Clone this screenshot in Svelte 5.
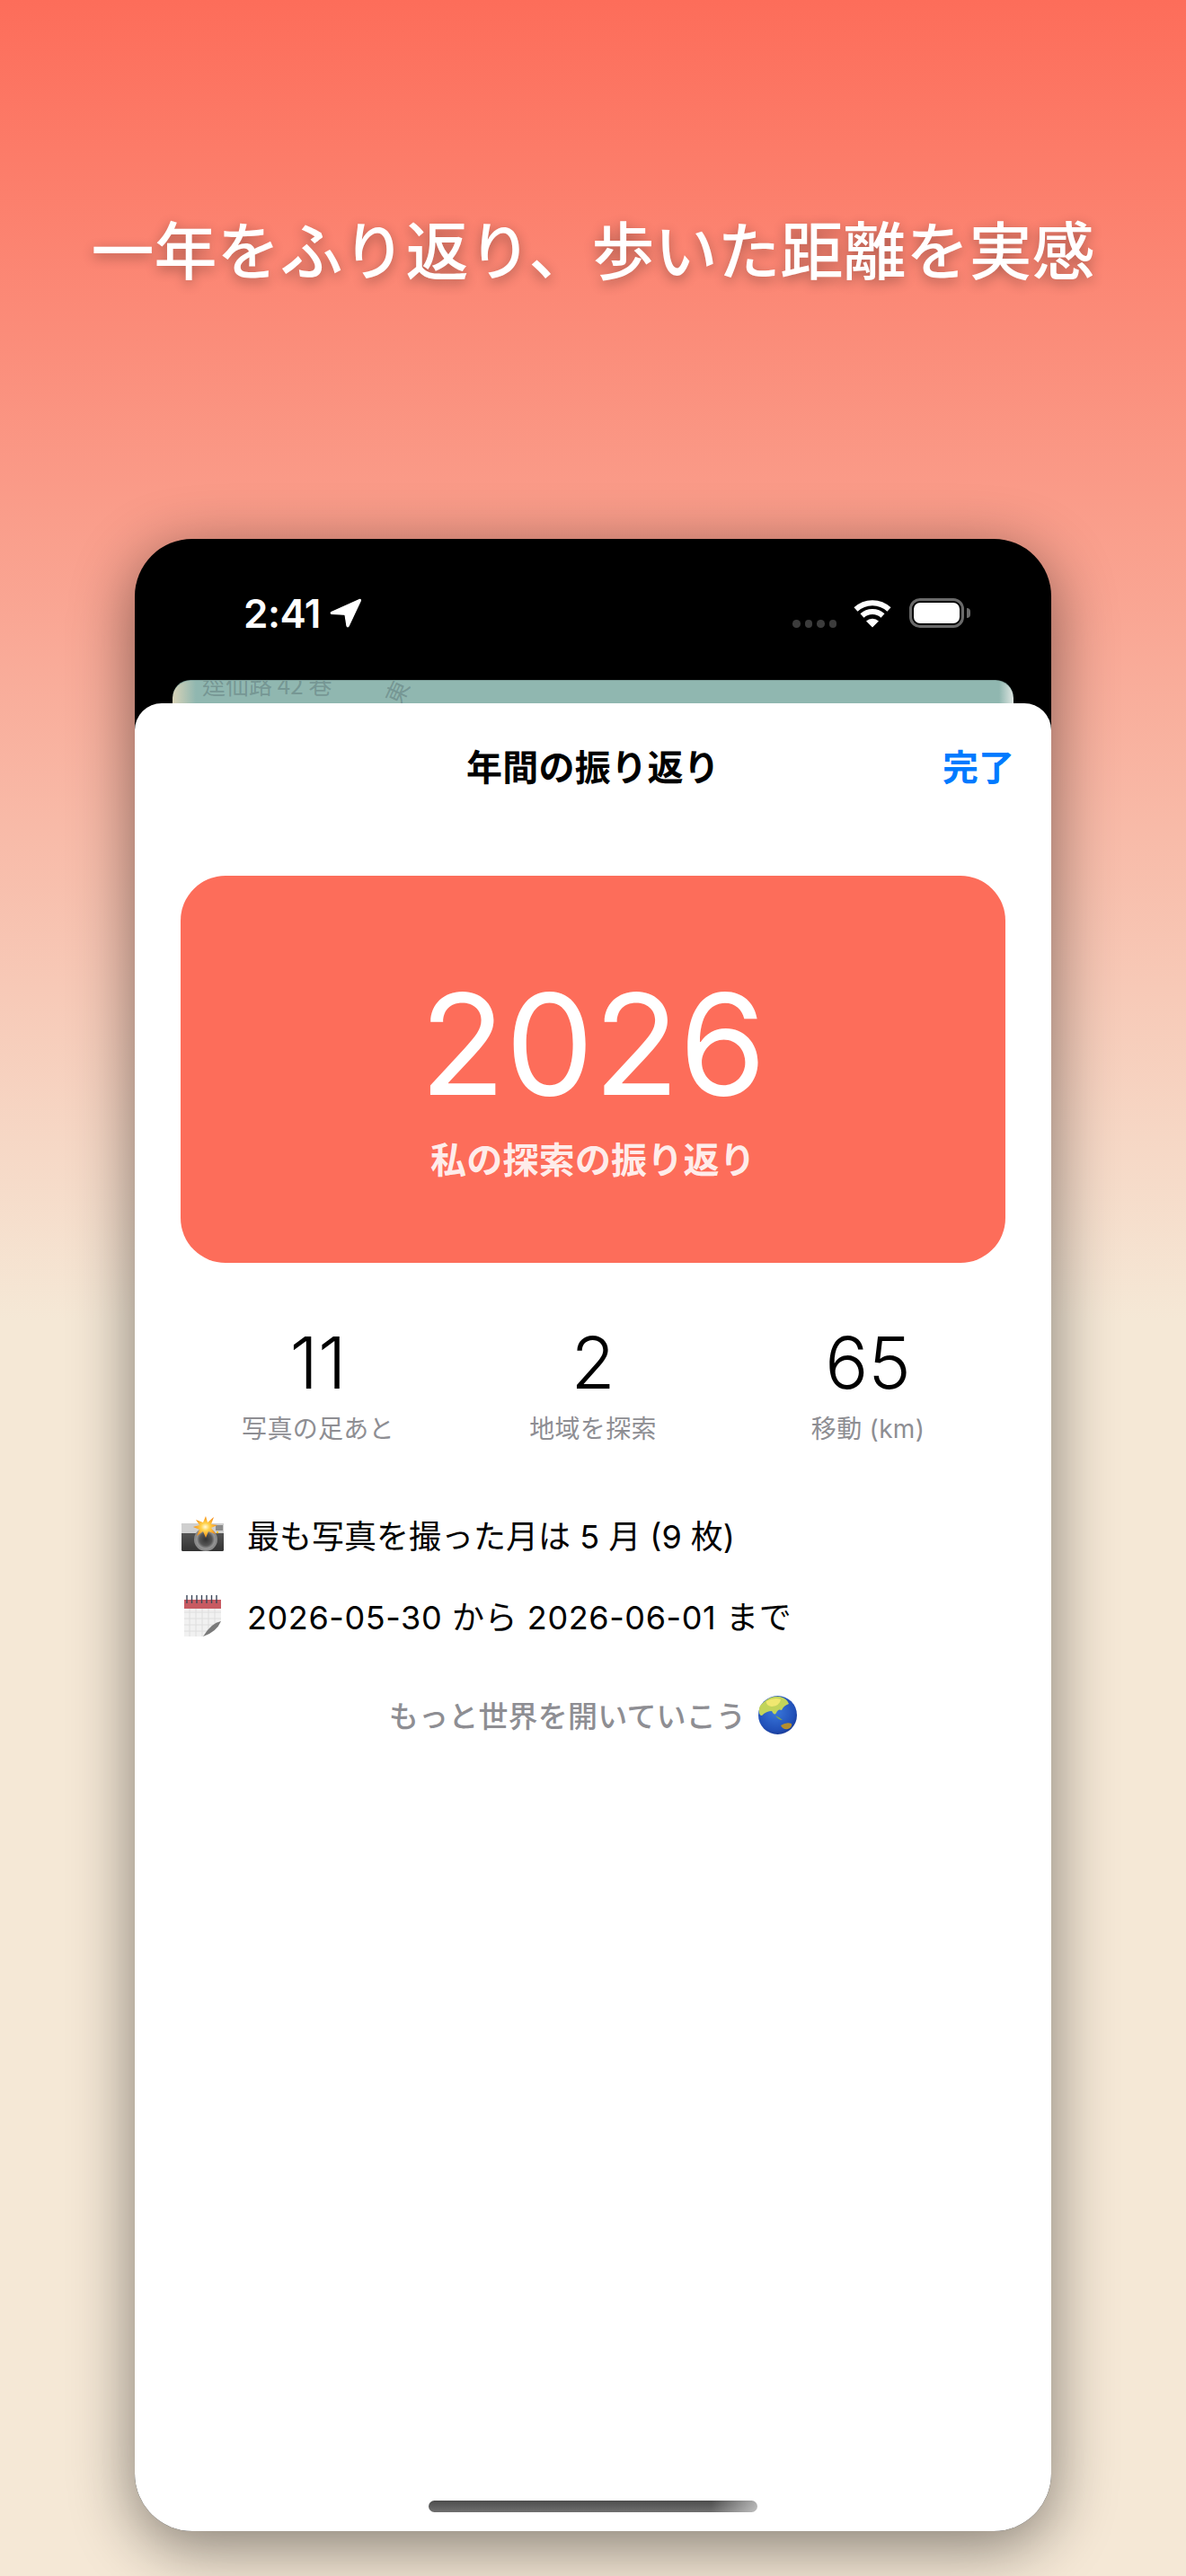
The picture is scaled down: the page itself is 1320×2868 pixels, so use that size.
<script>
	const stats = [
		{ value: '11', label: '写真の足あと' },
		{ value: '2', label: '地域を探索' },
		{ value: '65', label: '移動 (km)' }
	];
	const gridLines = [6, 13, 20, 27, 34];
</script>

<div class="page">
	<h1 class="hero">一年をふり返り、歩いた距離を実感</h1>

	<div class="phone">
		<div class="status">
			<span class="time">2:41</span>
			<svg class="arrow" viewBox="0 0 35 33" width="35" height="33">
				<path d="M33 1.5 L1.8 15.5 Q0.5 16.6 2 17.4 L16 18.2 Q17 18.3 17.2 19.4 L19 31 Q19.8 32.6 21 31.2 L34.4 2.8 Q34.8 1 33 1.5 Z" fill="#fff" stroke="#fff" stroke-width="1.2" stroke-linejoin="round" />
			</svg>
			<span class="spacer"></span>
			<span class="dots"><i></i><i></i><i></i><i></i></span>
			<svg class="wifi" viewBox="0 0 42 32" width="42" height="32">
				<path d="M2.5 11.5 A27 27 0 0 1 39.5 11.5" fill="none" stroke="#fff" stroke-width="6" />
				<path d="M9.5 18.5 A17 17 0 0 1 32.5 18.5" fill="none" stroke="#fff" stroke-width="6" />
				<path d="M21 31.5 L14 24.5 A10 10 0 0 1 28 24.5 Z" fill="#fff" />
			</svg>
			<span class="battery"><b></b></span>
		</div>

		<div class="peek">
			<div class="map">
				<span class="road">逕仙路 42 巷</span>
				<span class="road-2">東</span>
			</div>
		</div>

		<div class="sheet">
			<div class="nav">
				<span class="nav-title">年間の振り返り</span>
				<span class="done">完了</span>
			</div>

			<div class="card">
				<div class="year">2026</div>
				<div class="card-sub">私の探索の振り返り</div>
			</div>

			<div class="stats">
				{#each stats as s}
					<div class="stat">
						<div class="num">{s.value}</div>
						<div class="label">{s.label}</div>
					</div>
				{/each}
			</div>

			<div class="row">
				<svg class="emoji" viewBox="0 0 48 40" width="48" height="40">
					<defs>
						<linearGradient id="camBody" x1="0" y1="0" x2="0" y2="1">
							<stop offset="0" stop-color="#666" />
							<stop offset="1" stop-color="#333" />
						</linearGradient>
						<radialGradient id="lens">
							<stop offset="0" stop-color="#333" />
							<stop offset="0.65" stop-color="#555" />
							<stop offset="1" stop-color="#a0a0a0" />
						</radialGradient>
						<radialGradient id="burst">
							<stop offset="0" stop-color="#fffbe0" />
							<stop offset="0.35" stop-color="#ffd34d" />
							<stop offset="1" stop-color="#f58a12" />
						</radialGradient>
					</defs>
					<rect x="0" y="8" width="47" height="31" rx="1.5" fill="url(#camBody)" />
					<rect x="0" y="8" width="47" height="11" fill="#cfcfcf" />
					<rect x="38" y="10" width="8" height="6" fill="#8b8b8b" />
					<circle cx="27" cy="26" r="13" fill="#8a8a8a" />
					<circle cx="27" cy="26" r="10.5" fill="url(#lens)" />
					<path d="M27 0 L29 7 L36 1 L33 9 L40 10 L33 13 L38 20 L30 17 L27 24 L24 17 L17 22 L20 15 L13 12 L20 10 L16 4 L24 7 Z" fill="url(#burst)" />
					<circle cx="40" cy="18" r="1.2" fill="#f4c430" />
				</svg>
				<span>最も写真を撮った月は 5 月 (9 枚)</span>
			</div>

			<div class="row dates">
				<svg class="emoji" viewBox="-2 0 46 47" width="46" height="47">
					<rect x="0" y="6" width="41" height="41" fill="#f1f1f1" />
					{#each gridLines as g}
						<line x1={g} y1="16" x2={g} y2="47" stroke="#dedede" stroke-width="1" />
						<line x1="0" y1={g + 14} x2="41" y2={g + 14} stroke="#dedede" stroke-width="1" />
					{/each}
					<rect x="0" y="6" width="41" height="10" fill="#c75a62" />
					{#each [3, 8.5, 14, 19.5, 25, 30.5, 36] as x}
						<line x1={x} y1="1" x2={x} y2="10" stroke="#3c4658" stroke-width="1.4" />
					{/each}
					<path d="M41 30 Q36 40 21 47 L41 47 Z" fill="#fff" />
					<path d="M41 30 Q30 32 21 47 Q36 42 41 30 Z" fill="#7a7a7a" />
				</svg>
				<span>2026-05-30 から 2026-06-01 まで</span>
			</div>

			<div class="footer">
				<span>もっと世界を開いていこう</span>
				<svg viewBox="0 0 43 43" width="43" height="43">
					<defs>
						<radialGradient id="sea" cx="0.45" cy="0.4" r="0.7">
							<stop offset="0" stop-color="#3a78dc" />
							<stop offset="0.7" stop-color="#2150b8" />
							<stop offset="1" stop-color="#142c80" />
						</radialGradient>
					</defs>
					<circle cx="21.5" cy="21.5" r="21.5" fill="url(#sea)" />
					<path d="M5 8 Q14 -1 24 1 Q32 3 34 9 Q28 11 26 16 Q22 14 20 19 Q18 23 15 17 Q9 17 4 22 Q0 22 1 14 Q2 10 5 8 Z" fill="#c2d45a" />
					<path d="M9 6 Q18 1 25 4 Q24 11 15 12 Q8 11 9 6 Z" fill="#f0e870" />
					<path d="M25 33 Q31 29 37 31 Q38 35 33 37 Q27 38 25 33 Z" fill="#b58e2e" />
					<path d="M19 22 Q24 24 27 27 Q22 27 19 22 Z" fill="#7fa84a" />
				</svg>
			</div>

			<div class="home"></div>
		</div>
	</div>
</div>

<style>
	:global(body) {
		margin: 0;
	}

	.page {
		width: 1320px;
		height: 2868px;
		overflow: hidden;
		background: linear-gradient(180deg, #fd6d5a 0, #f5e8d6 1470px);
		font-family: Inter, "Noto Sans CJK JP", sans-serif;
		color: #000;
	}

	.hero {
		margin: 0;
		height: 600px;
		box-sizing: border-box;
		padding-top: 231px;
		text-align: center;
		font-size: 70px;
		line-height: 100px;
		font-weight: 500;
		color: #fff;
		text-shadow: 0 4px 14px rgba(0, 0, 0, 0.32);
		white-space: nowrap;
	}

	.phone {
		width: 1020px;
		height: 2218px;
		margin: 0 auto;
		background: #000;
		border-radius: 64px;
		box-shadow: 0 16px 70px rgba(0, 0, 0, 0.48);
		display: flex;
		flex-direction: column;
		overflow: hidden;
	}

	.status {
		height: 157px;
		box-sizing: border-box;
		padding: 66px 97px 0 121px;
		display: flex;
		align-items: flex-start;
		color: #fff;
		flex: none;
	}

	.time {
		font-size: 44px;
		font-weight: 600;
		line-height: 34px;
		letter-spacing: -0.5px;
	}

	.arrow {
		margin-left: 10px;
	}

	.spacer {
		flex: 1;
	}

	.dots {
		display: flex;
		gap: 5px;
		margin-top: 24px;
	}

	.dots i {
		width: 8.5px;
		height: 8.5px;
		border-radius: 50%;
		background: #3c3c3c;
	}

	.wifi {
		margin-left: 19px;
		margin-top: 1px;
	}

	.battery {
		position: relative;
		width: 61px;
		height: 33px;
		margin-left: 20px;
		box-sizing: border-box;
		border: 3px solid #6a6a6a;
		border-radius: 12px;
		padding: 2px;
		display: flex;
	}

	.battery b {
		flex: 1;
		background: #fff;
		border-radius: 7px;
	}

	.battery::after {
		content: "";
		position: absolute;
		right: -10px;
		top: 8px;
		width: 4px;
		height: 11px;
		background: #6a6a6a;
		border-radius: 0 5px 5px 0;
	}

	.peek {
		height: 26px;
		padding: 0 42px;
		flex: none;
	}

	.map {
		position: relative;
		height: 100%;
		overflow: hidden;
		border-radius: 20px 20px 0 0;
		border-top: 1px solid #7d9f99;
		box-sizing: border-box;
		background: linear-gradient(90deg, #d8d3b8 0, #90b7b0 26px, #90b7b0 calc(100% - 16px), #dfe6e2 100%);
		font-family: "Noto Sans CJK TC", sans-serif;
		color: rgba(70, 90, 95, 0.36);
	}

	.road {
		position: absolute;
		left: 33px;
		top: -12px;
		font-size: 26px;
		line-height: 32px;
	}

	.road-2 {
		position: absolute;
		left: 236px;
		top: -4px;
		font-size: 26px;
		line-height: 32px;
		transform: rotate(-65deg);
	}

	.sheet {
		flex: 1;
		background: #fff;
		border-radius: 30px 30px 0 0;
		padding: 0 51px;
		display: flex;
		flex-direction: column;
	}

	.nav {
		position: relative;
		height: 138px;
		flex: none;
		display: flex;
		align-items: center;
		justify-content: center;
	}

	.nav-title {
		font-size: 40px;
		font-weight: 700;
		letter-spacing: 0.3px;
	}

	.done {
		position: absolute;
		right: -10px;
		font-size: 40px;
		font-weight: 600;
		color: #007aff;
	}

	.card {
		margin-top: 54px;
		height: 431px;
		flex: none;
		background: #fd6d5a;
		border-radius: 50px;
		color: #fff;
		text-align: center;
		box-sizing: border-box;
		padding-top: 95px;
	}

	.year {
		font-size: 156px;
		font-weight: 390;
		line-height: 186px;
	}

	.card-sub {
		margin-top: 8px;
		font-size: 40px;
		line-height: 56px;
		font-weight: 600;
		letter-spacing: 0.2px;
		color: rgba(255, 255, 255, 0.9);
	}

	.stats {
		display: grid;
		grid-template-columns: repeat(3, 1fr);
		margin-top: 68px;
		text-align: center;
	}

	.num {
		font-size: 80px;
		font-weight: 340;
		line-height: 86px;
	}

	.label {
		margin-top: 11px;
		font-size: 28px;
		line-height: 40px;
		letter-spacing: 0.3px;
		color: #8e8e93;
	}

	.row {
		display: flex;
		align-items: center;
		gap: 24px;
		font-size: 36px;
		height: 50px;
	}

	.dates {
		letter-spacing: 0.6px;
	}

	.stats + .row {
		margin-top: 72px;
	}

	.row + .row {
		margin-top: 40px;
	}

	.emoji {
		width: 50px;
		flex: none;
	}

	.footer {
		margin-top: 63px;
		display: flex;
		justify-content: center;
		align-items: center;
		gap: 14px;
		font-size: 33px;
		font-weight: 500;
		letter-spacing: 0.2px;
		color: #8e8e93;
		height: 46px;
	}

	.home {
		margin-top: auto;
		margin-bottom: 21px;
		align-self: center;
		width: 366px;
		height: 13px;
		border-radius: 7px;
		background:
			linear-gradient(90deg, rgba(255, 255, 255, 0) 86%, rgba(255, 255, 255, 0.55) 100%),
			linear-gradient(180deg, #4c4c4c, #707070);
	}
</style>
